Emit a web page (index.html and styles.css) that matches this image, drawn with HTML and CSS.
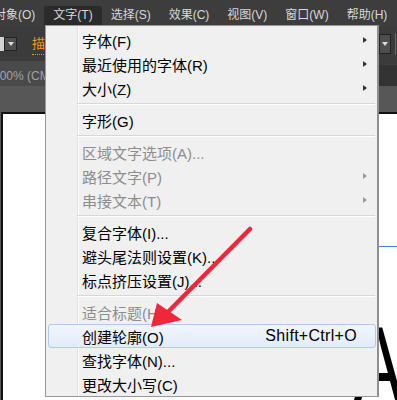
FILE: index.html
```html
<!DOCTYPE html>
<html lang="zh-CN">

<head>
    <meta charset="UTF-8">
    <meta name="viewport" content="width=device-width, initial-scale=1.0">
    <title>文字菜单</title>
    <link rel="stylesheet" href="styles.css">
</head>

<body>
    <div class="app">
        <div class="menubar">
            <span class="menubar-item">对象(O)</span>
            <span class="menubar-item active">文字(T)</span>
            <span class="menubar-item">选择(S)</span>
            <span class="menubar-item">效果(C)</span>
            <span class="menubar-item">视图(V)</span>
            <span class="menubar-item">窗口(W)</span>
            <span class="menubar-item">帮助(H)</span>
        </div>

        <div class="toolbar">
            <div class="select">
                <span class="select-input"></span>
                <span class="select-btn"></span>
            </div>
            <span class="stroke-link">描边</span>
            <div class="toolbar-space"></div>
            <div class="select select-right">
                <span class="select-btn"></span>
            </div>
            <span class="toolbar-sep"></span>
        </div>

        <div class="tabs">
            <div class="tab">100% (CMYK/预览)</div>
        </div>

        <div class="canvas">
            <div class="artboard">
                <span class="guide"></span>
                <span class="big-a">A</span>
            </div>
        </div>
    </div>

    <!-- 文字(T) 下拉菜单 -->
    <ul class="dropdown">
        <li class="menu-item">字体(F)<span class="sub-arrow"></span></li>
        <li class="menu-item">最近使用的字体(R)<span class="sub-arrow"></span></li>
        <li class="menu-item">大小(Z)<span class="sub-arrow"></span></li>
        <li class="menu-sep"></li>
        <li class="menu-item">字形(G)</li>
        <li class="menu-sep"></li>
        <li class="menu-item disabled">区域文字选项(A)...</li>
        <li class="menu-item disabled">路径文字(P)<span class="sub-arrow"></span></li>
        <li class="menu-item disabled">串接文本(T)<span class="sub-arrow"></span></li>
        <li class="menu-sep"></li>
        <li class="menu-item">复合字体(I)...</li>
        <li class="menu-item">避头尾法则设置(K)...</li>
        <li class="menu-item">标点挤压设置(J)...</li>
        <li class="menu-sep"></li>
        <li class="menu-item disabled">适合标题(H)</li>
        <li class="menu-item hover">创建轮廓(O)<span class="shortcut">Shift+Ctrl+O</span></li>
        <li class="menu-item">查找字体(N)...</li>
        <li class="menu-item">更改大小写(C)</li>
    </ul>

    <!-- 红色标注箭头 -->
    <svg class="callout" width="397" height="400" viewBox="0 0 397 400">
        <line x1="250" y1="229" x2="167" y2="313" stroke="#f0263a" stroke-width="4.5" stroke-linecap="round" />
        <polygon points="151,327 157,303 182,320" fill="#f0263a" />
    </svg>
</body>

</html>
```

FILE: styles.css
```css
* {
    box-sizing: border-box;
}

html,
body {
    margin: 0;
    padding: 0;
}

body {
    position: relative;
    width: 397px;
    height: 400px;
    overflow: hidden;
    background: #575757;
    font-family: "Liberation Sans", "Noto Sans CJK SC", sans-serif;
}

.app {
    display: flex;
    flex-direction: column;
    height: 400px;
}

/* 顶部菜单栏 */
.menubar {
    display: flex;
    height: 26px;
    background: #3d3d3d;
}

.menubar-item {
    margin-top: 6px;
    height: 19px;
    line-height: 19px;
    padding: 0 9px;
    font-size: 12px;
    color: #d8d8d8;
    white-space: nowrap;
    border-radius: 2px 2px 0 0;
}

.menubar-item:first-child {
    margin-left: -15px;
}

.menubar-item.active {
    background: #2b2b2b;
}

/* 控制栏 */
.toolbar {
    display: flex;
    align-items: center;
    height: 35px;
    background: #3b3b3b;
}

.select {
    display: flex;
    height: 14px;
}

.select-input {
    width: 4px;
    background: #d4d4d4;
}

.select-btn {
    display: flex;
    align-items: center;
    justify-content: center;
    width: 13px;
    background: #4e4e4e;
    border: 1px solid #222;
}

.select-btn::after {
    content: "";
    border-top: 4px solid #ddd;
    border-left: 3.5px solid transparent;
    border-right: 3.5px solid transparent;
}

.stroke-link {
    align-self: flex-start;
    margin: 10px 0 0 15px;
    padding-bottom: 3px;
    line-height: 15px;
    font-size: 13px;
    color: #f7931e;
    border-bottom: 1px dotted #f7931e;
    white-space: nowrap;
}

.toolbar-space {
    flex: 1;
}

.select-right {
    height: 20px;
    margin-right: 4px;
}

.select-right .select-btn {
    width: 12px;
}

.toolbar-sep {
    width: 1px;
    height: 22px;
    margin-right: 1px;
    background: #666;
}

/* 文档标签 */
.tabs {
    height: 25px;
    background: linear-gradient(#3b3b3b 4px, #333 4px);
}

.tab {
    width: 200px;
    height: 25px;
    margin-left: -7px;
    padding-top: 5px;
    line-height: 20px;
    font-size: 12px;
    color: #a3a3a3;
    background: #4a4a4a;
    white-space: nowrap;
}

/* 画布与画板 */
.canvas {
    display: flex;
    flex: 1;
    padding: 26px 0 0 1px;
    background: #575757;
}

.artboard {
    position: relative;
    flex: 1;
    background: #fff;
    border-top: 2px solid #111;
    border-left: 2px solid #111;
    overflow: hidden;
}

.guide {
    position: absolute;
    top: 132px;
    left: 200px;
    right: 0;
    height: 1px;
    background: #4a7cf4;
}

.big-a {
    position: absolute;
    left: 349.6px;
    top: 196px;
    font-size: 110px;
    line-height: 110px;
    color: #000;
    transform: scaleX(0.685);
    transform-origin: 0 0;
}

/* 下拉菜单 */
.dropdown {
    position: absolute;
    left: 45px;
    top: 25px;
    width: 334px;
    margin: 0;
    padding: 2px 0 0 0;
    list-style: none;
    border: 1px solid #979797;
    border-right: 2px solid #8e8e8e;
    /* 左侧图标栏的竖线 */
    background: linear-gradient(to right, #f0f0f0 31px, #e0e0e0 31px, #e0e0e0 32px, #fff 32px, #fff 33px, #f0f0f0 33px);
    font-size: 15px;
}

.menu-item {
    display: flex;
    align-items: center;
    height: 24px;
    padding: 0 10px 0 36px;
    color: #000;
    white-space: nowrap;
}

.menu-item.disabled {
    color: #8d8d8d;
}

.sub-arrow {
    margin-left: auto;
    width: 0;
    height: 0;
    border-left: 4px solid #333;
    border-top: 3.5px solid transparent;
    border-bottom: 3.5px solid transparent;
}

.disabled .sub-arrow {
    border-left-color: #9a9a9a;
}

.menu-item.hover {
    margin: 0 1px 0 2px;
    padding: 0 18px 0 33px;
    border: 1px solid #aecbef;
    border-radius: 3px;
    background: linear-gradient(#f1f6fd, #e2ebf8);
}

.shortcut {
    margin-left: auto;
    font-size: 16px;
    letter-spacing: 0.3px;
}

.menu-sep {
    height: 2px;
    margin: 3px 2px 3px 31px;
    border-top: 1px solid #d7d7d7;
    border-bottom: 1px solid #fff;
}

/* 标注 */
.callout {
    position: absolute;
    left: 0;
    top: 0;
    pointer-events: none;
}
```
